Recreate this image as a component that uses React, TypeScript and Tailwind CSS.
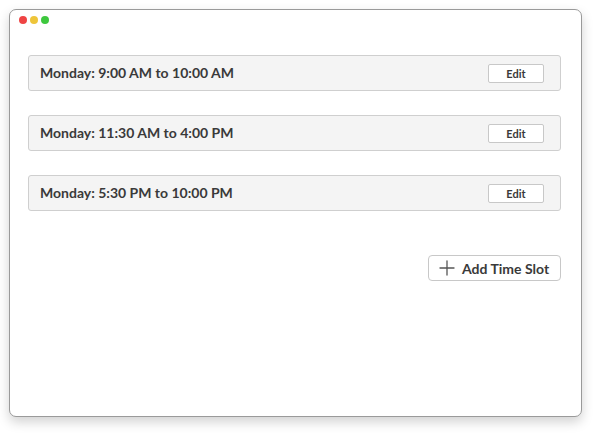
import { Plus } from "lucide-react";

const slots = [
	"Monday: 9:00 AM to 10:00 AM",
	"Monday: 11:30 AM to 4:00 PM",
	"Monday: 5:30 PM to 10:00 PM",
];

export default function App() {
	return (
		<div
			className="w-[600px] h-[435px] bg-white pt-[9px] pl-[9px]"
			style={{ fontFamily: "Lato, 'Open Sans', sans-serif" }}
		>
			<div className="w-[573px] h-[408px] rounded-[7px] border border-[#9a9a9a] bg-white shadow-[0_5px_12px_rgba(0,0,0,0.18)] flex flex-col">
				{/* window chrome dots */}
				<div className="flex gap-[3px] pl-[9px] pt-[6px]">
					<span className="size-[8px] rounded-full bg-[#ef4444]" />
					<span className="size-[8px] rounded-full bg-[#eec53a]" />
					<span className="size-[8px] rounded-full bg-[#3ec83e]" />
				</div>

				<div className="flex flex-col gap-[24px] pl-[18px] pr-[20px] pt-[31px]">
					{slots.map((slot) => (
						<div
							key={slot}
							className="h-[36px] rounded-[3px] border border-[#cfcfcf] bg-[#f4f4f4] flex items-center justify-between pl-[11px] pr-[16px]"
						>
							<span className="text-[14px] leading-[20px] font-bold text-[#3a3a3a] -mt-px">
								{slot}
							</span>
							<button className="w-[56px] h-[19px] rounded-[2px] border border-[#c8c8c8] bg-white text-[11px] font-bold text-[#3a3a3a] leading-none">
								Edit
							</button>
						</div>
					))}
				</div>

				<div className="flex justify-end pr-[20px] pt-[44px]">
					<button className="h-[26px] w-[133px] rounded-[4px] border border-[#c8c8c8] bg-white flex items-center gap-[3px] pl-[6px]">
						<Plus className="size-[24px] text-[#555]" strokeWidth={1.3} />
						<span className="text-[14px] font-bold text-[#3a3a3a]">
							Add Time Slot
						</span>
					</button>
				</div>
			</div>
		</div>
	);
}
